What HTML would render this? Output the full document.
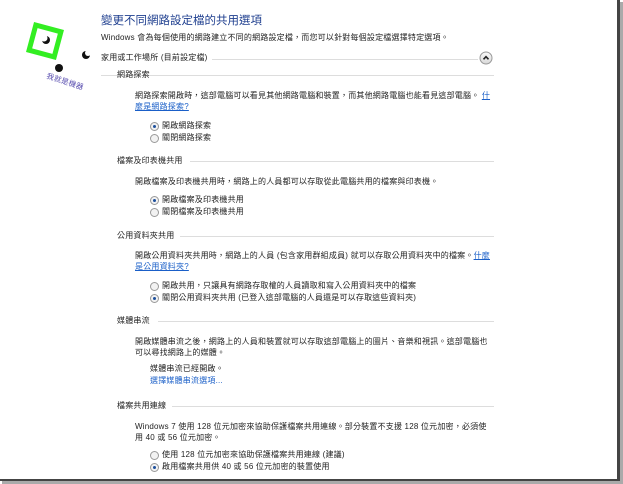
<!DOCTYPE html>
<html><head><meta charset="utf-8"><style>
body{margin:0;width:623px;height:484px;background:#fff;position:relative;overflow:hidden;font-family:"Liberation Sans","Noto Sans CJK TC",sans-serif;font-size:8px;letter-spacing:0.2px;color:#222}
.t{position:absolute;white-space:nowrap;line-height:10px}
.h{position:absolute;height:1px;background:#ddd}
.a{color:#1a5fc8;text-decoration:underline}
.l{color:#1a5fc8}
.r{position:absolute;width:7px;height:7px;border:1px solid #999;border-radius:50%;background:#f2f2f2}
.r.on::after{content:"";position:absolute;left:2px;top:2px;width:3px;height:3px;border-radius:50%;background:#1c4f9c}
</style></head><body>
<div style="position:absolute;left:617px;top:0;width:3px;height:482px;background:#444"></div>
<div style="position:absolute;left:620px;top:2px;width:3px;height:482px;background:#aaa"></div>
<div style="position:absolute;left:0;top:479px;width:620px;height:2px;background:#444"></div>
<div style="position:absolute;left:2px;top:481px;width:621px;height:3px;background:#aaa"></div>

<svg style="position:absolute;left:0;top:0" width="100" height="100">
<g transform="rotate(15 45 41)"><rect x="32" y="28" width="26" height="26" fill="none" stroke="#33ee22" stroke-width="5"/></g>
<circle cx="46" cy="40" r="4" fill="#111"/><circle cx="44" cy="38" r="3.5" fill="#fff"/>
<circle cx="86" cy="55" r="4" fill="#111"/><circle cx="88" cy="53" r="3" fill="#fff"/>
<circle cx="59" cy="68" r="4" fill="#111"/>
<text x="46" y="78" transform="rotate(18 46 78)" font-size="7.5" fill="#5a4fb0" font-family="Noto Sans CJK TC">我就是機器</text>
</svg>

<div class="t" style="left:101px;top:14px;font-size:11.5px;line-height:14px;color:#1f3f8f;letter-spacing:0">變更不同網路設定檔的共用選項</div>
<div class="t" style="left:101px;top:33px">Windows 會為每個使用的網路建立不同的網路設定檔，而您可以針對每個設定檔選擇特定選項。</div>
<div class="t" style="left:101px;top:53px">家用或工作場所 (目前設定檔)</div>
<div class="h" style="left:212px;top:59px;width:266px"></div>
<svg style="position:absolute;left:479px;top:51px" width="14" height="14"><defs><linearGradient id="g" x1="0" y1="0" x2="0" y2="1"><stop offset="0" stop-color="#fafafa"/><stop offset="1" stop-color="#d8d8d8"/></linearGradient></defs><circle cx="7" cy="7" r="6" fill="url(#g)" stroke="#999"/><path d="M4.5 8.3 L7 5.7 L9.5 8.3" fill="none" stroke="#222" stroke-width="1.6"/></svg>
<div class="h" style="left:101px;top:75px;width:393px"></div>
<div class="t" style="left:117px;top:70px">網路探索</div>
<div class="h" style="left:155px;top:75px;width:339px"></div>
<div class="t" style="left:135px;top:91px">網路探索開啟時，這部電腦可以看見其他網路電腦和裝置，而其他網路電腦也能看見這部電腦。 <span class="a">什</span></div>
<div class="t" style="left:135px;top:102px"><span class="a">麼是網路探索?</span></div>
<div class="r on" style="left:150px;top:122px"></div><div class="t" style="left:162px;top:121px">開啟網路探索</div>
<div class="r" style="left:150px;top:134px"></div><div class="t" style="left:162px;top:133px">關閉網路探索</div>

<div class="t" style="left:117px;top:156px">檔案及印表機共用</div>
<div class="h" style="left:190px;top:161px;width:304px"></div>
<div class="t" style="left:135px;top:177px">開啟檔案及印表機共用時，網路上的人員都可以存取從此電腦共用的檔案與印表機。</div>
<div class="r on" style="left:150px;top:196px"></div><div class="t" style="left:162px;top:195px">開啟檔案及印表機共用</div>
<div class="r" style="left:150px;top:208px"></div><div class="t" style="left:162px;top:207px">關閉檔案及印表機共用</div>

<div class="t" style="left:117px;top:231px">公用資料夾共用</div>
<div class="h" style="left:180px;top:236px;width:314px"></div>
<div class="t" style="left:135px;top:251px">開啟公用資料夾共用時，網路上的人員 (包含家用群組成員) 就可以存取公用資料夾中的檔案。<span class="a">什麼</span></div>
<div class="t" style="left:135px;top:262px"><span class="a">是公用資料夾?</span></div>
<div class="r" style="left:150px;top:282px"></div><div class="t" style="left:162px;top:281px">開啟共用，只讓具有網路存取權的人員讀取和寫入公用資料夾中的檔案</div>
<div class="r on" style="left:150px;top:294px"></div><div class="t" style="left:162px;top:293px">關閉公用資料夾共用 (已登入這部電腦的人員還是可以存取這些資料夾)</div>

<div class="t" style="left:117px;top:316px">媒體串流</div>
<div class="h" style="left:158px;top:321px;width:336px"></div>
<div class="t" style="left:135px;top:337px">開啟媒體串流之後，網路上的人員和裝置就可以存取這部電腦上的圖片、音樂和視訊。這部電腦也</div>
<div class="t" style="left:135px;top:348px">可以尋找網路上的媒體。</div>
<div class="t" style="left:150px;top:364px">媒體串流已經開啟。</div>
<div class="t" style="left:150px;top:376px"><span class="l">選擇媒體串流選項...</span></div>

<div class="t" style="left:117px;top:401px">檔案共用連線</div>
<div class="h" style="left:172px;top:406px;width:322px"></div>
<div class="t" style="left:135px;top:422px">Windows 7 使用 128 位元加密來協助保護檔案共用連線。部分裝置不支援 128 位元加密，必須使</div>
<div class="t" style="left:135px;top:433px">用 40 或 56 位元加密。</div>
<div class="r" style="left:150px;top:451px"></div><div class="t" style="left:162px;top:450px">使用 128 位元加密來協助保護檔案共用連線 (建議)</div>
<div class="r on" style="left:150px;top:463px"></div><div class="t" style="left:162px;top:462px">啟用檔案共用供 40 或 56 位元加密的裝置使用</div>
</body></html>
